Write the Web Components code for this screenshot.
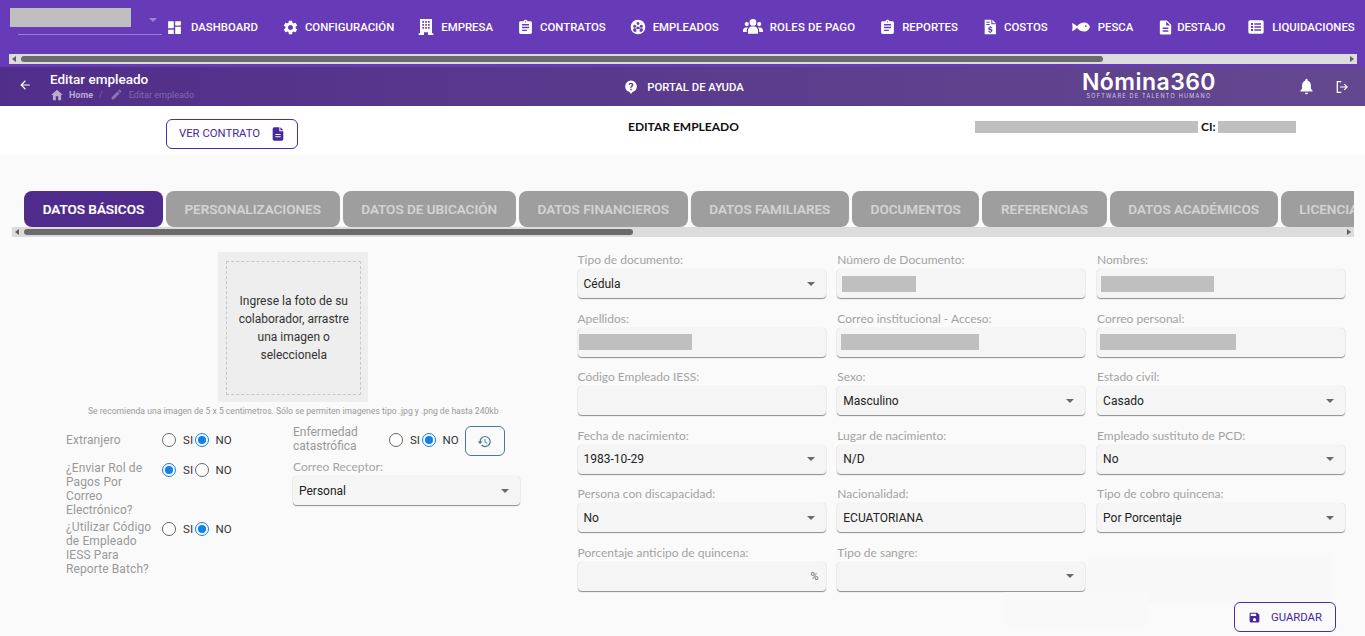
<!DOCTYPE html>
<html lang="es">
<head>
<meta charset="utf-8">
<title>Editar empleado</title>
<style>
    html, body { margin: 0; height: 636px; overflow: hidden; background: #fafafa; font-family: Roboto, sans-serif; }
</style>
</head>
<body>
<app-topnav></app-topnav>
<app-subheader></app-subheader>
<app-contractbar></app-contractbar>
<app-main></app-main>

<script>
// iconos en viewBox 24x24
const ICONS = {
    dashboard: '<path d="M3 13h8V3H3v10zm0 8h8v-6H3v6zm10 0h8V11h-8v10zm0-18v6h8V3h-8z"/>',
    cog: '<path d="M19.14 12.94c.04-.3.06-.61.06-.94 0-.32-.02-.64-.07-.94l2.03-1.58c.18-.14.23-.41.12-.61l-1.92-3.32c-.12-.22-.37-.29-.59-.22l-2.39.96c-.5-.38-1.03-.7-1.62-.94l-.36-2.54c-.04-.24-.24-.41-.48-.41h-3.84c-.24 0-.43.17-.47.41l-.36 2.54c-.59.24-1.13.57-1.62.94l-2.39-.96c-.22-.08-.47 0-.59.22L2.74 8.87c-.12.21-.08.47.12.61l2.03 1.58c-.05.3-.09.63-.09.94s.02.64.07.94l-2.03 1.58c-.18.14-.23.41-.12.61l1.92 3.32c.12.22.37.29.59.22l2.39-.96c.5.38 1.03.7 1.62.94l.36 2.54c.05.24.24.41.48.41h3.84c.24 0 .44-.17.47-.41l.36-2.54c.59-.24 1.13-.56 1.62-.94l2.39.96c.22.08.47 0 .59-.22l1.92-3.32c.12-.22.07-.47-.12-.61l-2.01-1.58zM12 15.6c-1.98 0-3.6-1.62-3.6-3.6s1.62-3.6 3.6-3.6 3.6 1.62 3.6 3.6-1.62 3.6-3.6 3.6z"/>',
    building: '<path fill-rule="evenodd" d="M3 0h18v21.500h2V24h-8v-4h-6v4H1v-2.500h2zM6.500 3v2.500H9V3zm4.300 0v2.500h2.500V3zm4.200 0v2.500h2.500V3zM6.500 7.500V10H9V7.500zm4.300 0V10h2.500V7.500zm4.200 0V10h2.500V7.500zM6.500 12v2.500H9V12zm4.300 0v2.500h2.500V12zm4.200 0v2.500h2.500V12z"/>',
    clipboard: '<path d="M19 3h-4.180C14.400 1.840 13.300 1 12 1c-1.300 0-2.400.840-2.820 2H5c-1.100 0-2 .9-2 2v14c0 1.100.9 2 2 2h14c1.100 0 2-.9 2-2V5c0-1.100-.9-2-2-2zm-7 0c.550 0 1 .450 1 1s-.450 1-1 1-1-.450-1-1 .450-1 1-1zm2 14H7v-2h7v2zm3-4H7v-2h10v2zm0-4H7V7h10v2z"/>',
    people: '<path fill-rule="evenodd" d="M12 1a11 11 0 1 0 0 22 11 11 0 0 0 0-22zM12 4.500a2.200 2.200 0 1 1 0 4.400 2.200 2.200 0 0 1 0-4.400zM7 8.500a2.300 2.300 0 1 1 0 4.600 2.300 2.300 0 0 1 0-4.600zm10 0a2.300 2.300 0 1 1 0 4.600 2.300 2.300 0 0 1 0-4.600zM4.500 16.500c0-1.500 1-2.500 2.500-2.500s2.500 1 2.500 2.500V19H6zm10 0c0-1.500 1-2.500 2.500-2.500s2.500 1 2.500 2.500L18 19h-3.500zM10.500 11.500h3c.8 0 1 .5 1 1V15h-5v-2.500c0-.5.200-1 1-1z"/>',
    users: '<circle cx="12" cy="6.500" r="4"/><circle cx="4.500" cy="8.500" r="2.500"/><circle cx="19.500" cy="8.500" r="2.500"/><path d="M6 20v-3.500c0-3 2-5 4.500-5h3c2.500 0 4.500 2 4.500 5V20z"/><path d="M0 16.500c0-2.500 1.500-4 3.500-4H6c-1 1-1.500 2.300-1.500 4V18H0zM24 16.500c0-2.500-1.500-4-3.500-4H18c1 1 1.500 2.300 1.500 4V18H24z"/>',
    costs: '<path fill-rule="evenodd" d="M4 1h10v7h7v15H4zM15.500 1 21 6.500h-5.500zM6.500 4v1.500h5V4zm0 3.500V9h5V7.500zM13.300 11h-1.600v1.100c-1.400.3-2.300 1.200-2.300 2.400 0 1.500 1.200 2.100 2.800 2.500 1 .3 1.400.5 1.400 1s-.5.8-1.300.8c-.9 0-1.400-.4-1.500-1H9.200c.1 1.300 1 2.100 2.500 2.400V21h1.600v-1.200c1.500-.3 2.400-1.200 2.400-2.500 0-1.600-1.200-2.200-2.900-2.600-1-.2-1.300-.5-1.300-.9s.4-.8 1.100-.8 1.100.4 1.200 1h1.700c-.1-1.200-.9-2-2.200-2.300z"/>',
    fish: '<path fill-rule="evenodd" d="M6 12c2.500-4 6-6 10.500-6 3.500 0 6.300 2.700 7.500 6-1.200 3.300-4 6-7.500 6C12 18 8.500 16 6 12zm12.500-2.500a1.200 1.200 0 1 0 0 2.400 1.200 1.200 0 0 0 0-2.400z"/><path d="M0 6.500c3 1 5.500 3 8 5.500-2.500 2.500-5 4.500-8 5.500 1-4 1-7 0-11z"/>',
    doc: '<path d="M14 2H6c-1.100 0-1.990.9-1.990 2L4 20c0 1.100.890 2 1.990 2H18c1.100 0 2-.9 2-2V8l-6-6zm2 16H8v-2h8v2zm0-4H8v-2h8v2zm-3-5V3.500L18.500 9H13z"/>',
    list: '<path fill-rule="evenodd" d="M3 2h18a2.500 2.500 0 0 1 2.500 2.500v15A2.500 2.500 0 0 1 21 22H3a2.500 2.500 0 0 1-2.500-2.500v-15A2.500 2.500 0 0 1 3 2zm1.500 4v3h3V6zm5 .5v2h10v-2zM4.500 10.500v3h3v-3zm5 .5v2h10v-2zM4.500 15v3h3v-3zm5 .5v2h10v-2z"/>',
    back: '<path d="M20 11H7.830l5.590-5.590L12 4l-8 8 8 8 1.410-1.410L7.830 13H20v-2z"/>',
    home: '<path d="M10 21v-7h4v7h5v-9h3L12 3 2 12h3v9z"/>',
    pencil: '<path d="M3 17.250V21h3.750L17.810 9.940l-3.750-3.750L3 17.250zM20.710 7.040a1 1 0 0 0 0-1.410l-2.340-2.340a1 1 0 0 0-1.410 0l-1.830 1.830 3.750 3.750 1.830-1.830z"/>',
    help: '<path fill-rule="evenodd" d="M12 1a10 10 0 0 1 10 10c0 5-3.500 8.500-7.500 9.500L12 24l-2.500-3.500C5.500 19.500 2 16 2 11A10 10 0 0 1 12 1zm-.100 3.800c-2.200 0-3.900 1.300-4.100 3.500h2.400c.1-.9.800-1.400 1.700-1.400s1.600.6 1.600 1.400c0 .8-.5 1.200-1.300 1.800-1 .7-1.500 1.500-1.500 2.900v.4h2.400v-.3c0-.8.300-1.100 1.100-1.700 1-.7 1.800-1.500 1.800-2.800 0-2.300-1.800-3.800-4.100-3.800zM10.700 15v2.500h2.500V15z"/>',
    bell: '<path d="M12 23c1.300 0 2.300-1 2.300-2.200H9.700C9.700 22 10.700 23 12 23zm8.500-5.500-2.300-2.300V10c0-3.200-2-5.800-4.700-6.600V2.500a1.500 1.500 0 0 0-3 0v.9C7.800 4.200 5.800 6.800 5.800 10v5.200l-2.300 2.300v1.700h17z"/>',
    logout: '<path d="M4 3h7v2H6v14h5v2H4z"/><path d="M16 7l5 5-5 5-1.300-1.300 2.800-2.800H9v-1.800h8.500l-2.800-2.800z"/>',
    fileSolid: '<path d="M14 2H6.500A2.500 2.500 0 0 0 4 4.500v15A2.500 2.500 0 0 0 6.500 22h11a2.500 2.500 0 0 0 2.500-2.500V8h-6zm2 15H8v-1.600h8zm0-3.500H8v-1.600h8zM15.500 2v4.500H20z"/>',
    history: '<path d="M13 3a9 9 0 0 0-9 9H1l3.890 3.890.07.14L9 12H6a7 7 0 1 1 2.050 4.950l-1.420 1.420A9 9 0 1 0 13 3zm-1 5v5l4.280 2.540.72-1.210-3.500-2.080V8z"/>',
    save: '<path d="M17 3H5a2 2 0 0 0-2 2v14a2 2 0 0 0 2 2h14a2 2 0 0 0 2-2V7l-4-4zm-5 16a3 3 0 1 1 0-6 3 3 0 0 1 0 6zm3-10H5V5h10z"/>'
};

function icon(name, size, color, extra = '') {
    return `<svg width="${size}" height="${size}" viewBox="0 0 24 24" fill="${color}" style="display:block;flex:none;${extra}" aria-hidden="true">${ICONS[name]}</svg>`;
}

class AppBase extends HTMLElement {
    constructor(){
        super();
        this.attachShadow({ mode: "open" });
    }
    getStyles(){ return ''; }
    getMarkup(){ return ''; }
    getTemplate(){
        const template = document.createElement('template');
        template.innerHTML = `<style>${this.getStyles()}</style>${this.getMarkup()}`;
        return template;
    }
    render(){
        this.shadowRoot.appendChild(this.getTemplate().content.cloneNode(true));
    }
    connectedCallback(){
        this.render();
    }
}

// barra de scroll pintada: flecha, riel y pulgar
class AppScrollbar extends AppBase {
    getStyles(){
        return `
            :host { display: flex; align-items: center; height: 10px; background: #dcdcdc; }
            .arrow { flex: none; width: 0; height: 0; border: 3px solid transparent; }
            .l { border-right: 4px solid #5f5f5f; border-left-width: 0; margin-left: 3px; }
            .r { border-left: 4px solid #5f5f5f; border-right-width: 0; margin-right: 3px; }
            .rail { flex: 1; height: 6px; }
            .thumb { height: 6px; background: #6b6b6b; border-radius: 3px; }
        `;
    }
    getMarkup(){
        const left = this.getAttribute('thumb-left');
        const width = this.getAttribute('thumb-width');
        return `<span class="arrow l"></span><div class="rail"><div class="thumb" style="margin-left:${left}px;width:${width}px"></div></div><span class="arrow r"></span>`;
    }
}

class AppNavItem extends AppBase {
    getStyles(){
        return `
            :host { display: flex; align-items: center; flex: none; color: #fff; font: 500 11.400px Roboto, sans-serif; white-space: nowrap; }
            span { margin-left: var(--gap, 9px); letter-spacing: var(--ls, 0); }
        `;
    }
    getMarkup(){
        const size = this.getAttribute('size') || 16;
        return `${icon(this.getAttribute('icon'), size, '#fff')}<span><slot></slot></span>`;
    }
}

class AppTopnav extends AppBase {
    getStyles(){
        return `
            :host { display: block; height: 67px; background: #673ab7; box-sizing: border-box; padding: 0 8px 0 9px; }
            .row { height: 54px; display: flex; align-items: center; overflow: hidden; }
            .picker { flex: none; width: 153px; height: 54px; position: relative; margin-right: 4px; }
            .mask { width: 121px; height: 19px; background: #bfbfbf; margin: 8px 0 0 1px; }
            .line { height: 1px; background: rgba(255,255,255,.35); margin: 7px 0 0 9px; width: 144px; }
            .caret { position: absolute; top: 18px; left: 140px; border: 4px solid transparent; border-top: 4px solid #9b86c9; border-bottom: 0; }
            .items { display: flex; align-items: center; gap: 24px; }
        `;
    }
    getMarkup(){
        return `
            <div class="row">
                <div class="picker"><div class="mask"></div><div class="line"></div><span class="caret"></span></div>
                <div class="items">
                    <app-nav-item icon="dashboard" size="17" style="--gap:8px">DASHBOARD</app-nav-item>
                    <app-nav-item icon="cog" size="17" style="--gap:6px">CONFIGURACIÓN</app-nav-item>
                    <app-nav-item icon="building" style="--gap:7px">EMPRESA</app-nav-item>
                    <app-nav-item icon="clipboard" size="17" style="--gap:6px">CONTRATOS</app-nav-item>
                    <app-nav-item icon="people" style="--gap:7px">EMPLEADOS</app-nav-item>
                    <app-nav-item icon="users" size="20" style="--gap:7px;--ls:.15px">ROLES DE PAGO</app-nav-item>
                    <app-nav-item icon="clipboard" size="17" style="--gap:6px">REPORTES</app-nav-item>
                    <app-nav-item icon="costs" style="--gap:6px">COSTOS</app-nav-item>
                    <app-nav-item icon="fish" size="18" style="--gap:8px">PESCA</app-nav-item>
                    <app-nav-item icon="doc" size="17" style="--gap:3px;--ls:-.15px">DESTAJO</app-nav-item>
                    <app-nav-item icon="list" style="--gap:8px;margin-left:-1px">LIQUIDACIONES</app-nav-item>
                </div>
            </div>
            <app-scrollbar thumb-left="5" thumb-width="1082"></app-scrollbar>
        `;
    }
}

class AppSubheader extends AppBase {
    getStyles(){
        return `
            :host { display: grid; grid-template-columns: 1fr auto 1fr; align-items: center; height: 39px; color: #fff;
                background: linear-gradient(90deg, #512e8a, #64488f); font-family: Roboto, sans-serif; }
            .left { display: flex; align-items: center; padding-left: 18px; }
            .title { margin: -1px 0 0 18px; }
            h1 { margin: 0; font: 500 13.500px/16px Roboto, sans-serif; }
            .crumbs { display: flex; align-items: center; margin-top: 1px; font-size: 9px; line-height: 12px; color: #7f6aa6; }
            .crumbs b { color: #b9aacf; margin: 0 6px 0 5px; font-weight: 700; }
            .crumbs i { font-style: normal; margin-right: 7px; }
            .help { display: flex; align-items: center; font: 500 11.300px Roboto, sans-serif; gap: 9px; margin: 1px 0 0 3px; }
            .right { display: flex; align-items: center; justify-content: flex-end; padding-right: 15px; }
            .logo { display: flex; flex-direction: column; align-items: center; margin-right: 82px; margin-top: -3px; }
            .logo strong { font: 600 23px/22px Inter, sans-serif; letter-spacing: .45px; }
            .logo small { font: 400 5.500px/6px Inter, sans-serif; letter-spacing: 1.250px; color: #d4cbe2; }
        `;
    }
    getMarkup(){
        return `
            <div class="left">
                ${icon('back', 14, '#fff', 'margin-top:-3px')}
                <div class="title">
                    <h1>Editar empleado</h1>
                    <div class="crumbs">${icon('home', 14, '#b9aacf')}<b>Home</b><i>/</i>${icon('pencil', 13, '#8a76ad', 'margin-right:6px')}<span>Editar empleado</span></div>
                </div>
            </div>
            <div class="help">${icon('help', 14, '#fff')}<span>PORTAL DE AYUDA</span></div>
            <div class="right">
                <div class="logo"><strong>Nómina360</strong><small>SOFTWARE DE TALENTO HUMANO</small></div>
                ${icon('bell', 17, '#fff')}
                ${icon('logout', 16, '#fff', 'margin-left:19px')}
            </div>
        `;
    }
}

class AppOutlineButton extends AppBase {
    getStyles(){
        return `
            :host { display: inline-flex; align-items: center; box-sizing: border-box; border: 1px solid #4f2ca0; border-radius: 6px; background: #fff;
                color: #4527a0; font: 400 11.300px Roboto, sans-serif; white-space: nowrap; }
        `;
    }
    getMarkup(){ return `<slot></slot>`; }
}

class AppContractbar extends AppBase {
    getStyles(){
        return `
            :host { display: grid; grid-template-columns: 166px 132px 330px 110px 237px auto; align-items: center; height: 49px; background: #fff; }
            app-outline-button { grid-column: 2; height: 30px; padding-left: 12px; gap: 10px; margin-top: 6px; }
            h2 { grid-column: 4; margin: 0 0 8px; font: 700 12px Lato, sans-serif; color: #111; white-space: nowrap; }
            .who { grid-column: 6; display: flex; align-items: center; margin: 0 0 8px; font: 700 12px Lato, sans-serif; color: #111; }
            .mask { height: 12px; background: #bfbfbf; }
        `;
    }
    getMarkup(){
        return `
            <app-outline-button>VER CONTRATO ${icon('fileSolid', 16, '#4527a0')}</app-outline-button>
            <h2>EDITAR EMPLEADO</h2>
            <div class="who"><span class="mask" style="width:223px"></span><span style="margin:0 2px 0 3px">CI:</span><span class="mask" style="width:78px"></span></div>
        `;
    }
}

class AppTabs extends AppBase {
    getStyles(){
        return `
            :host { display: block; margin: 0 11px 0 12px; }
            .strip { display: flex; gap: 3px; overflow: hidden; padding-left: 12px; }
            .tab { flex: none; height: 36px; padding: 0 18.700px; display: flex; align-items: center; box-sizing: border-box;
                border-radius: 8px; background: #9e9e9e; color: #d3d3d3; font: 500 13.500px Roboto, sans-serif; -webkit-text-stroke: .2px currentColor; white-space: nowrap; }
            .on { background: #4f2b8c; color: #fff; }
        `;
    }
    getMarkup(){
        const tabs = ['DATOS BÁSICOS', 'PERSONALIZACIONES', 'DATOS DE UBICACIÓN', 'DATOS FINANCIEROS', 'DATOS FAMILIARES', 'DOCUMENTOS', 'REFERENCIAS', 'DATOS ACADÉMICOS', 'LICENCIAS'];
        return `
            <div class="strip">${tabs.map((t, i) => `<div class="tab${i === 0 ? ' on' : ''}">${t}</div>`).join('')}</div>
            <app-scrollbar thumb-left="5" thumb-width="609"></app-scrollbar>
        `;
    }
}

class AppPhoto extends AppBase {
    getStyles(){
        return `
            :host { display: flex; flex-direction: column; align-items: center; font-family: Roboto, sans-serif; }
            .box { width: 150px; height: 150px; background: #eee; padding: 9px 7px 7px 8px; box-sizing: border-box; }
            .dash { height: 100%; border: 1px dashed #c8c8c8; box-sizing: border-box; display: flex; align-items: center; justify-content: center;
                text-align: center; color: #333; font-size: 12px; line-height: 18px; padding: 0 8px; }
            p { margin: 3px 0 0; font-size: 8.600px; line-height: 12px; color: #999; white-space: nowrap; }
        `;
    }
    getMarkup(){
        return `
            <div class="box"><div class="dash">Ingrese la foto de su colaborador, arrastre una imagen o seleccionela</div></div>
            <p>Se recomienda una imagen de 5 x 5 centimetros. Sólo se permiten imagenes tipo .jpg y .png de hasta 240kb</p>
        `;
    }
}

class AppRadios extends AppBase {
    getStyles(){
        return `
            :host { display: flex; align-items: center; font: 400 11.500px Roboto, sans-serif; color: #333; flex: none; }
            .dot { width: 14px; height: 14px; box-sizing: border-box; border: 1px solid #666; border-radius: 50%; background: #fff; }
            .dot.on { border: 1.500px solid #1180e8; padding: 2px; background: #1180e8 content-box; }
            .si { margin: 0 3px 0 7px; width: 9px; }
            .no { margin-left: 6.500px; }
        `;
    }
    getMarkup(){
        const si = this.getAttribute('value') === 'si';
        return `<span class="dot${si ? ' on' : ''}"></span><span class="si">SI</span><span class="dot${si ? '' : ' on'}"></span><span class="no">NO</span>`;
    }
}

class AppField extends AppBase {
    getStyles(){
        return `
            :host { display: block; font-family: Lato, sans-serif; min-width: 0; }
            label { display: block; height: 14px; font-size: 12px; line-height: 14px; color: #a3a3a3; white-space: nowrap; padding-top: 1px; margin-bottom: 2px; }
            .box { height: 29px; display: flex; align-items: center; box-sizing: border-box; padding: 0 6px; background: #f5f5f5; border-radius: 4px;
                box-shadow: 0 1px 1px #8d8d8d, 0 0 1px #cfcfcf; font: 400 12px Roboto, sans-serif; color: #222; }
            .v { flex: 1; white-space: nowrap; }
            .caret { width: 0; height: 0; border: 4.500px solid transparent; border-top: 4px solid #6a6a6a; border-bottom: 0; margin-right: 5px; }
            .mask { display: block; height: 16px; background: #bfbfbf; }
            .suffix { color: #666; font-size: 11px; margin-right: 1px; }
        `;
    }
    getMarkup(){
        const mask = this.getAttribute('mask');
        const maskStyle = mask ? `<span class="mask" style="width:${mask}px;margin-left:${this.getAttribute('mask-left') || 0}px"></span>` : '';
        const caret = this.hasAttribute('select') ? '<span class="caret"></span>' : '';
        const suffix = this.hasAttribute('suffix') ? `<span class="suffix">${this.getAttribute('suffix')}</span>` : '';
        return `
            <label>${this.getAttribute('label')}</label>
            <div class="box"><span class="v">${maskStyle}${this.getAttribute('value') || ''}</span>${suffix}${caret}</div>
        `;
    }
}

class AppFormLeft extends AppBase {
    getStyles(){
        return `
            :host { display: block; font: 400 12px/14px Roboto, sans-serif; color: #999; }
            app-photo { margin-left: 9px; }
            .cols { display: grid; grid-template-columns: 227px 227px; padding-left: 66px; margin-top: 7px; }
            .line { display: grid; grid-template-columns: 96px auto; align-items: start; }
            .c1 { display: flex; flex-direction: column; letter-spacing: .1px; }
            .c1 .one { margin-top: 9px; margin-bottom: 14px; }
            .c1 .two { margin-bottom: 3px; }
            .c1 .two app-radios, .c1 .last app-radios { margin-top: 2px; }
            .label { display: block; width: 90px; }
            .enf { display: flex; align-items: center; height: 30px; }
            .enf .label { width: 96px; }
            .enf app-radios { margin-top: 1px; }
            app-outline-button { width: 40px; height: 30px; margin: 4px 0 0 6px; justify-content: center; border-color: #4b7a8c; background: transparent; }
            app-field { margin-top: 5px; }
        `;
    }
    getMarkup(){
        return `
            <app-photo></app-photo>
            <div class="cols">
                <div class="c1">
                    <div class="line one"><span class="label">Extranjero</span><app-radios value="no"></app-radios></div>
                    <div class="line two"><span class="label">¿Enviar Rol de Pagos Por Correo Electrónico?</span><app-radios value="si"></app-radios></div>
                    <div class="line last"><span class="label">¿Utilizar Código de Empleado IESS Para Reporte Batch?</span><app-radios value="no"></app-radios></div>
                </div>
                <div>
                    <div class="enf"><span class="label">Enfermedad catastrófica</span><app-radios value="no"></app-radios><app-outline-button>${icon('history', 15, '#4b7a8c')}</app-outline-button></div>
                    <app-field label="Correo Receptor:" value="Personal" select></app-field>
                </div>
            </div>
        `;
    }
}

class AppMain extends AppBase {
    getStyles(){
        return `
            :host { display: block; height: 481px; background: #fafafa; padding-top: 36px; box-sizing: border-box; position: relative; overflow: hidden; }
            .form { display: grid; grid-template-columns: 577.500px 1fr; margin-top: 15px; }
            .fields { display: grid; grid-template-columns: repeat(3, 248px); column-gap: 11.800px; grid-auto-rows: 58.500px; }
            .save { position: absolute; right: 29px; bottom: 4px; height: 30px; width: 102px; padding-left: 13px; gap: 10px; background: transparent; }
            .patch { position: absolute; background: #f8f8f8; }
        `;
    }
    getMarkup(){
        return `
            <div class="patch" style="left:1087px;top:401px;width:243px;height:47px"></div>
            <div class="patch" style="left:1003px;top:437px;width:144px;height:35px;background:#f9f9f9"></div>
            <app-tabs></app-tabs>
            <div class="form">
                <app-form-left></app-form-left>
                <div class="fields">
                    <app-field label="Tipo de documento:" value="Cédula" select></app-field>
                    <app-field label="Número de Documento:" mask="74" mask-left="-1"></app-field>
                    <app-field label="Nombres:" mask="113" mask-left="-2"></app-field>
                    <app-field label="Apellidos:" mask="113" mask-left="-5"></app-field>
                    <app-field label="Correo institucional - Acceso:" mask="138" mask-left="-2"></app-field>
                    <app-field label="Correo personal:" mask="136" mask-left="-3"></app-field>
                    <app-field label="Código Empleado IESS:"></app-field>
                    <app-field label="Sexo:" value="Masculino" select></app-field>
                    <app-field label="Estado civil:" value="Casado" select></app-field>
                    <app-field label="Fecha de nacimiento:" value="1983-10-29" select></app-field>
                    <app-field label="Lugar de nacimiento:" value="N/D"></app-field>
                    <app-field label="Empleado sustituto de PCD:" value="No" select></app-field>
                    <app-field label="Persona con discapacidad:" value="No" select></app-field>
                    <app-field label="Nacionalidad:" value="ECUATORIANA"></app-field>
                    <app-field label="Tipo de cobro quincena:" value="Por Porcentaje" select></app-field>
                    <app-field label="Porcentaje anticipo de quincena:" suffix="%"></app-field>
                    <app-field label="Tipo de sangre:" select></app-field>
                </div>
            </div>
            <app-outline-button class="save">${icon('save', 13, '#4527a0')}GUARDAR</app-outline-button>
        `;
    }
}

customElements.define('app-scrollbar', AppScrollbar);
customElements.define('app-nav-item', AppNavItem);
customElements.define('app-topnav', AppTopnav);
customElements.define('app-subheader', AppSubheader);
customElements.define('app-outline-button', AppOutlineButton);
customElements.define('app-contractbar', AppContractbar);
customElements.define('app-tabs', AppTabs);
customElements.define('app-photo', AppPhoto);
customElements.define('app-radios', AppRadios);
customElements.define('app-field', AppField);
customElements.define('app-form-left', AppFormLeft);
customElements.define('app-main', AppMain);
</script>
</body>
</html>
